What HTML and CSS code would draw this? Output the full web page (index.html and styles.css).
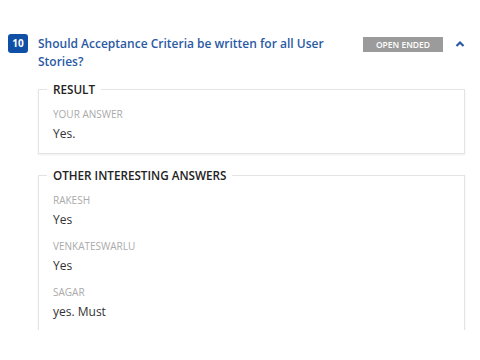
FILE: index.html
```html
<!DOCTYPE html>
<html lang="en">
<head>
    <meta charset="UTF-8">
    <title>Quiz Review</title>
    <link rel="stylesheet" href="styles.css">
</head>
<body>
    <div class="quiz">
        <div class="question">
            <span class="num">10</span>
            <h2 class="title">Should Acceptance Criteria be written for all User Stories?</h2>
            <span class="type">OPEN ENDED</span>
            <svg class="toggle" width="10" height="8" viewBox="0 0 10 8">
                <polyline points="1.5,6 5,2.5 8.5,6" fill="none" stroke="#2a5aa3" stroke-width="2.2"/>
            </svg>
        </div>

        <fieldset class="box">
            <legend>Result</legend>
            <div class="entry">
                <div class="who">Your Answer</div>
                <div class="said">Yes.</div>
            </div>
        </fieldset>

        <fieldset class="box others">
            <legend>Other Interesting Answers</legend>
            <div class="entry">
                <div class="who">Rakesh</div>
                <div class="said">Yes</div>
            </div>
            <div class="entry">
                <div class="who">Venkateswarlu</div>
                <div class="said">Yes</div>
            </div>
            <div class="entry">
                <div class="who">Sagar</div>
                <div class="said">yes. Must</div>
            </div>
        </fieldset>
    </div>
</body>
</html>
```

FILE: styles.css
```css
body {
    margin: 0;
    background: #fff;
    font-family: "Open Sans", "Noto Sans", sans-serif;
    color: #333;
}
.quiz {
    height: 330px;
    overflow: hidden;
    padding-top: 34px;
    box-sizing: border-box;
}
.question {
    display: flex;
    align-items: flex-start;
    padding-left: 8px;
}
.num {
    width: 20px;
    height: 19px;
    line-height: 19px;
    border-radius: 3px;
    background: #0f4fa5;
    color: #fff;
    font-size: 10px;
    font-weight: 700;
    text-align: center;
    flex-shrink: 0;
}
.title {
    width: 310px;
    margin: 1px 0 0 10px;
    font-size: 12px;
    font-weight: 600;
    line-height: 18px;
    color: #2a5aa3;
}
.type {
    margin: 3px 0 0 15px;
    width: 80px;
    height: 15px;
    line-height: 15px;
    background: #9b9b9b;
    color: #fff;
    font-size: 8.5px;
    font-weight: 600;
    text-align: center;
    flex-shrink: 0;
}
.toggle {
    margin: 6px 0 0 12px;
}
.box {
    margin: 10px 15px 0 38px;
    padding: 0 14px 10px;
    border: 1px solid #e4e4e4;
    box-shadow: 0 1px 2px rgba(0, 0, 0, 0.07);
}
.box legend {
    margin-left: -6px;
    padding: 0 6px;
    font-size: 11.7px;
    font-weight: 600;
    line-height: 16px;
    color: #222;
    text-transform: uppercase;
}
.others {
    margin-top: 13px;
    padding-bottom: 60px;
}
.entry {
    margin-top: 10px;
}
.others .entry + .entry {
    margin-top: 10px;
}
.who {
    font-size: 10px;
    line-height: 14px;
    color: #aaa;
    text-transform: uppercase;
}
.said {
    margin-top: 4px;
    font-size: 12px;
    line-height: 18px;
    color: #333;
}
```
